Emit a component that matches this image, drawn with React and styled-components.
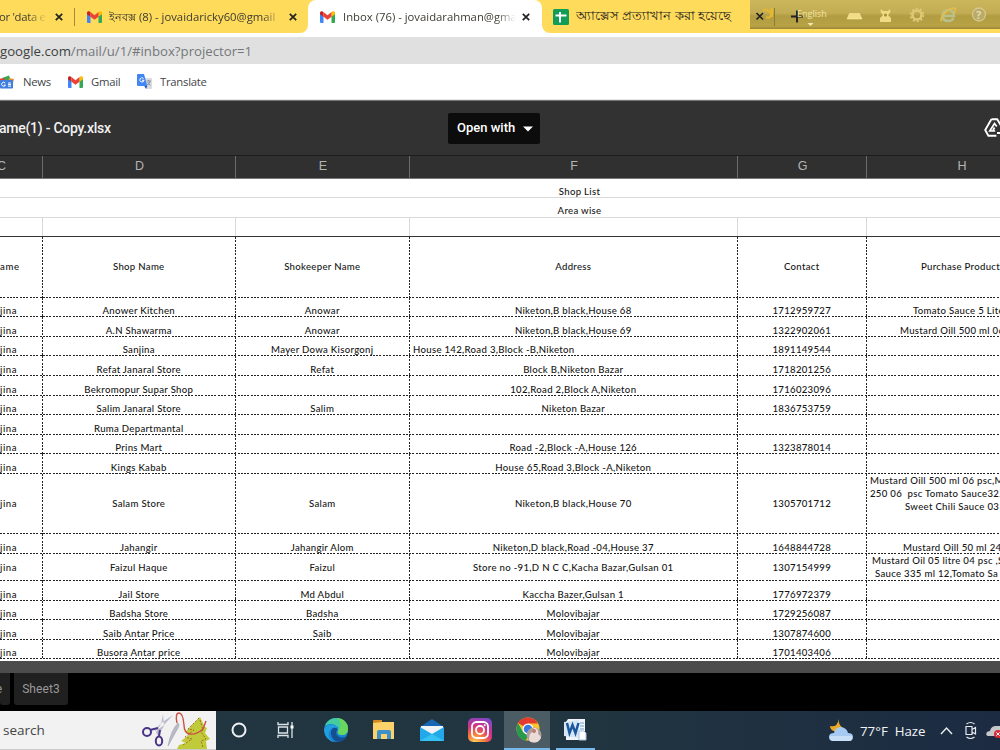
import styled, { createGlobalStyle } from 'styled-components';

const rows = [
  { h: 61, head: true, c: 'ame', d: 'Shop Name', e: 'Shokeeper Name', f: 'Address', g: 'Contact', x: [[54, 'Purchase Product']] },
  { h: 19, d: 'Anower Kitchen', e: 'Anowar', f: 'Niketon,B black,House 68', g: '1712959727', x: [[46, 'Tomato Sauce 5 Liter']] },
  { h: 20, d: 'A.N Shawarma', e: 'Anowar', f: 'Niketon,B black,House 69', g: '1322902061', x: [[33, 'Mustard Oill 500 ml 06']] },
  { h: 19, d: 'Sanjina', e: 'Mayer Dowa Kisorgonj', f: 'House 142,Road 3,Block -B,Niketon', left: true, g: '1891149544' },
  { h: 20, d: 'Refat Janaral Store', e: 'Refat', f: 'Block B,Niketon Bazar', g: '1718201256' },
  { h: 20, d: 'Bekromopur Supar Shop', f: '102,Road 2,Block A,Niketon', g: '1716023096' },
  { h: 19, d: 'Salim Janaral Store', e: 'Salim', f: 'Niketon Bazar', g: '1836753759' },
  { h: 20, d: 'Ruma Departmantal' },
  { h: 19, d: 'Prins Mart', f: 'Road -2,Block -A,House 126', g: '1323878014' },
  { h: 20, d: 'Kings Kabab', f: 'House 65,Road 3,Block -A,Niketon' },
  {
    h: 60,
    middle: true,
    d: 'Salam Store',
    e: 'Salam',
    f: 'Niketon,B black,House 70',
    g: '1305701712',
    x: [[3, 'Mustard Oill 500 ml 06 psc,M'], [3, '250 06  psc Tomato Sauce32.'], [38, 'Sweet Chili Sauce 03']],
  },
  { h: 20, d: 'Jahangir', e: 'Jahangir Alom', f: 'Niketon,D black,Road -04,House 37', g: '1648844728', x: [[36, 'Mustard Oill 50 ml 24']] },
  {
    h: 27,
    middle: true,
    d: 'Faizul Haque',
    e: 'Faizul',
    f: 'Store no -91,D N C C,Kacha Bazar,Gulsan 01',
    g: '1307154999',
    x: [[5, 'Mustard Oil 05 litre 04 psc ,S'], [8, 'Sauce 335 ml 12,Tomato Sa']],
  },
  { h: 20, d: 'Jail Store', e: 'Md Abdul', f: 'Kaccha Bazer,Gulsan 1', g: '1776972379' },
  { h: 19, d: 'Badsha Store', e: 'Badsha', f: 'Molovibajar', g: '1729256087' },
  { h: 20, d: 'Saib Antar Price', e: 'Saib', f: 'Molovibajar', g: '1307874600' },
  { h: 19, d: 'Busora Antar price', f: 'Molovibajar', g: '1701403406' },
];

function GmailIcon() {
  return (
    <svg width="15" height="12" viewBox="0 0 15 12">
      <path d="M0 2v9q0 1 1 1h2.5V5z" fill="#4285f4" />
      <path d="M15 2v9q0 1-1 1h-2.5V5z" fill="#34a853" />
      <path d="M0 2Q0 .5 1.3.2q1-.2 2.2.8v4.7L0 3.2z" fill="#c5221f" />
      <path d="M15 2q0-1.5-1.3-1.8-1-.2-2.2.8v4.7L15 3.2z" fill="#fbbc04" />
      <path d="M3.5 1l4 3.2 4-3.2v4.7l-4 3.1-4-3.1z" fill="#ea4335" />
    </svg>
  );
}

function CloseIcon() {
  return (
    <svg width="8" height="8" viewBox="0 0 8 8">
      <path d="M.8.8l6.4 6.4M7.2.8L.8 7.2" stroke="#222" strokeWidth="1.7" />
    </svg>
  );
}

function SheetsIcon() {
  return (
    <svg width="16" height="16" viewBox="0 0 16 16">
      <rect width="16" height="16" rx="1.5" fill="#109d58" />
      <path d="M2.500 6.500h11M7 3v10.500" stroke="#fff" strokeWidth="2" />
    </svg>
  );
}

function NewsIcon() {
  return (
    <svg width="14" height="14" viewBox="0 0 14 14">
      <path d="M2 3l7-2.500 2 5H2z" fill="#34a853" />
      <path d="M0 3.500h5v3H0z" fill="#ea4335" />
      <path d="M9 3l5 1-1 4H8z" fill="#e8903a" />
      <rect x="0" y="5" width="13" height="8.500" rx="1" fill="#3f7de0" />
      <path d="M5.200 8a2 2 0 1 0 .3 2H4M8 8h3M8 9.600h3M8 11.200h3" stroke="#fff" fill="none" />
    </svg>
  );
}

function TranslateIcon() {
  return (
    <svg width="15" height="15" viewBox="0 0 15 15">
      <path d="M6 4h8q1 0 1 1v9q0 1-1 1H9z" fill="#d9dce0" />
      <path d="M1 0h6l3.300 12H1q-1 0-1-1V1q0-1 1-1z" fill="#4285f4" />
      <path d="M7.300 12h3L9 15z" fill="#2457b5" />
      <path d="M6.500 4.500a2.100 2.100 0 1 0 .5 1.800H5" stroke="#fff" fill="none" />
      <path d="M9.500 7H14M11.800 6v1M10 11q3-1 3.200-4M10.500 8q.8 2 3 3.500" stroke="#7f8b99" strokeWidth=".9" fill="none" />
    </svg>
  );
}

function DriveAddIcon() {
  return (
    <svg width="22" height="20" viewBox="0 0 22 20">
      <path d="M7.400 1.200h5.800l6 10.200M7.400 1.200L1.200 12l3.200 5.800h8" fill="none" stroke="#fff" strokeWidth="1.900" />
      <path d="M12.800 8.500l-2.300-3L5.800 13h5.400M10.500 9.500L9 12.500" fill="none" stroke="#fff" strokeWidth="1.700" />
      <path d="M17 11v8M13 15h8" stroke="#fff" strokeWidth="2" />
    </svg>
  );
}

function LanguageBar() {
  return (
    <Overlay>
      <svg width="250" height="29" viewBox="0 0 250 29">
        <path d="M13 11q3-3 5 0t3-2v6q-1 4-5 2M22 8v9" stroke="#e3b72e" strokeWidth="2" fill="none" />
        <path d="M24.500 8v18" stroke="#8d7a37" />
        <path d="M6.500 13l6.500 6.500M13 13l-6.500 6.500" stroke="#222" strokeWidth="1.700" />
        <path d="M41 16.500h12M47 10.500v12" stroke="#222" strokeWidth="1.900" />
        <path d="M57.500 23h6l-3 3z" fill="#f4e9b5" />
        <path d="M97 19l2.500-5.500h10L112 19z" fill="#f2dd86" stroke="#fff0aa" strokeWidth=".5" />
        <path d="M131 9l2 2h5l2-2 .5 3-2.500 3 3 3v4h-11v-4l3-3-2.500-3z" fill="#f0da83" />
        <circle cx="135.500" cy="15" r="1.500" fill="#a18c3e" />
        <circle cx="167" cy="15" r="4.500" fill="none" stroke="#e0c878" strokeWidth="2.500" />
        <circle cx="167" cy="15" r="6.400" fill="none" stroke="#e0c878" strokeWidth="1.800" strokeDasharray="2 2.020" />
        <path d="M192.500 16h11.500q0-6-5.500-6t-6 6q.5 5 6 5 3.500 0 5-3" fill="none" stroke="#b9c18a" strokeWidth="2.600" />
        <path d="M192 21q-3-1 2-7 5-6 10-6 3 1 0 5" fill="none" stroke="#e7bd45" strokeWidth="1.500" />
        <circle cx="229" cy="14.500" r="6.500" fill="#b9aa68" stroke="#d6c88d" strokeWidth="1.300" />
      </svg>
      <LanguageName>English</LanguageName>
      <HelpMark>?</HelpMark>
    </Overlay>
  );
}

function SewingArt() {
  return (
    <svg width="75" height="38" viewBox="0 0 75 38">
      <path d="M22 3l-2 10-5 8 2 4 6-10zM32 4L22 15l-8 5 1-3 8-7z" fill="#bcbdcc" />
      <circle cx="6" cy="21" r="4" fill="none" stroke="#493485" strokeWidth="2" />
      <path d="M9 19l8-2M18 25l1-6" stroke="#493485" strokeWidth="2" />
      <ellipse cx="18" cy="30" rx="3.200" ry="4.500" fill="none" stroke="#493485" strokeWidth="2" />
      <path d="M37 12q2 1 0 5L27 35q3-16 10-23z" fill="#b9bac6" stroke="#999ba9" strokeWidth=".5" />
      <path d="M59 6l5 10 2 1-2 5 5 6-4 2 1 8H36l2-4 7-2-5-2 8-6-4-3z" fill="#c0cb3a" />
      <path d="M58 7L47 18l6 1-9 7 7 2-9 6M59 9l3 10-2 2 5 7-5 2 2 6" fill="none" stroke="#a66a28" strokeDasharray="2 1.500" />
      <path d="M36 12q-2-10 2-10t5 12q0 8 6 9t13-5l3-8" fill="none" stroke="#cc5046" strokeWidth="1.400" />
    </svg>
  );
}

function EdgeIcon() {
  return (
    <svg width="24" height="24" viewBox="0 0 24 24">
      <circle cx="12" cy="12" r="12" fill="#1685d1" />
      <path d="M1 8Q4 0 12 0c8 0 12 6 12 11 0 4-3 6-6 6-3 0-5-2-4-4 2-5-7-10-13-5z" fill="#45cba0" />
      <path d="M13 0q11 1 11 11c0 4-3 6-6 6-3 0-5-2-4-4Q20 6 13 0z" fill="#68d65f" />
      <path d="M14 9Q6 9 7 16q1 7 8 8 6-1 8-6-5 3-9 0-3-2-1-6z" fill="#164f91" />
      <path d="M0 12q2-6 8-5 5 0 6 4-6-4-9 3-2 6 5 10Q2 22 0 12z" fill="#239fe0" />
    </svg>
  );
}

function FolderIcon() {
  return (
    <svg width="22" height="19" viewBox="0 0 22 19">
      <path d="M0 1q0-1 1-1h8v3H0z" fill="#d48a20" />
      <path d="M0 3l9-1h12v17H0z" fill="#fbd36a" />
      <path d="M4 19V12q0-2 2-2h10q2 0 2 2v7h-4v-5H8v5z" fill="#3d91ca" />
    </svg>
  );
}

function MailIcon() {
  return (
    <svg width="24" height="22" viewBox="0 0 24 22">
      <path d="M0 8L12 0l12 8v3H0z" fill="#1567b4" />
      <path d="M1 7h22v10H1z" fill="#f0f3f5" />
      <path d="M0 8l12 7L24 8v14H0z" fill="#23a9ea" />
      <path d="M12 15L0 22h24z" fill="#36c2f5" />
    </svg>
  );
}

function InstagramIcon() {
  return (
    <svg width="24" height="24" viewBox="0 0 24 24">
      <defs>
        <radialGradient id="insta" cx=".3" cy="1.050" r="1.200">
          <stop offset="0" stopColor="#fed55f" />
          <stop offset=".35" stopColor="#f3743b" />
          <stop offset=".6" stopColor="#d73383" />
          <stop offset="1" stopColor="#6c4bd0" />
        </radialGradient>
      </defs>
      <rect width="24" height="24" rx="5" fill="url(#insta)" />
      <rect x="4" y="4" width="16" height="16" rx="4.500" fill="none" stroke="#fff" strokeWidth="1.800" />
      <circle cx="12" cy="12" r="4" fill="none" stroke="#fff" strokeWidth="1.800" />
      <circle cx="16.700" cy="7.300" r="1" fill="#fff" />
    </svg>
  );
}

function ChromeIcon() {
  return (
    <svg width="26" height="26" viewBox="0 0 26 26">
      <circle cx="12" cy="12" r="11.500" fill="#f8c62c" />
      <path d="M12 12L2 6Q5 .5 12 .5 19 .5 22 6.500H12z" fill="#e33b2e" />
      <path d="M2 6l5 9 5 3-2 5.400Q.5 21.500.5 12 .5 9 2 6z" fill="#269b4b" />
      <circle cx="12" cy="12" r="5.500" fill="#fff" />
      <circle cx="12" cy="12" r="4.300" fill="#3979df" />
      <circle cx="18" cy="18" r="7.500" fill="#ad9d9b" />
      <path d="M13 23q0-6 3-8 1-5 4-4 3 2 2 6 3 2 3 4-3 5-7 4.500-4 0-5-2.500z" fill="#eadbd8" />
      <circle cx="18" cy="14" r="2" fill="#b77b6b" />
    </svg>
  );
}

function WordIcon() {
  return (
    <svg width="23" height="22" viewBox="0 0 23 22">
      <path d="M4 0h17v21H2V3z" fill="#eff5fb" />
      <path d="M0 3l15-2v18L0 17z" fill="#d7e7f5" />
      <path d="M3 4l2.500 10L8.500 6l3 8L14.500 4" fill="none" stroke="#1c579f" strokeWidth="2.500" />
      <path d="M16 4h4M16 7h4M16 10h4" stroke="#6c9fd0" />
      <path d="M15 12h5l2 2v7h-7z" fill="#fff" stroke="#a8c4df" />
    </svg>
  );
}

function WeatherIcon() {
  return (
    <svg width="24" height="23" viewBox="0 0 24 23">
      <path d="M10 0q-1 6 4 9l-6 4Q1 12 1 7q7 2 9-7z" fill="#eca928" />
      <path d="M4 22q-4 0-4-4t5-4q1-6 7-6 6 1 7 6 5 0 5 4t-4 4z" fill="#a6caf2" />
      <path d="M1 17h22q1 5-3 5H4q-4-1-3-5z" fill="#c9def7" />
    </svg>
  );
}

function Cells({ row }) {
  return (
    <Row $h={row.h} $middle={row.head || row.middle}>
      <Cell $left={0} $wide>{row.c || 'jina'}</Cell>
      <Cell>{row.d}</Cell>
      <Cell>{row.e}</Cell>
      <Cell $left={row.left ? 3 : undefined}>{row.f}</Cell>
      <Cell>{row.g}</Cell>
      <ProductCell $align={row.h === 60 ? 'flex-start' : row.h <= 20 ? 'flex-end' : 'center'}>
        {(row.x || []).map(([indent, text]) => (
          <ProductLine key={text} $indent={indent}>
            {text}
          </ProductLine>
        ))}
      </ProductCell>
    </Row>
  );
}

function App() {
  return (
    <Screen>
      <GlobalStyle />
      <TabStrip>
        <Tab $w={75}>
          <TabTitle $x={-1} $w={48} $tight>or 'data e</TabTitle>
          <TabClose $x={55}><CloseIcon /></TabClose>
        </Tab>
        <Tab $w={233} $line>
          <TabIcon $x={12}><GmailIcon /></TabIcon>
          <TabTitle $x={34} $w={173}>ইনবক্স (8) - jovaidaricky60@gmail</TabTitle>
          <TabClose $x={214}><CloseIcon /></TabClose>
        </Tab>
        <Tab $w={234} $active>
          <TabIcon $x={12}><GmailIcon /></TabIcon>
          <TabTitle $x={35} $w={173}>Inbox (76) - jovaidarahman@gmail</TabTitle>
          <TabClose $x={214}><CloseIcon /></TabClose>
        </Tab>
        <Tab $w={208}>
          <TabIcon $x={11}><SheetsIcon /></TabIcon>
          <TabTitle $x={34} $w={174} $full>অ্যাক্সেস প্রত্যাখান করা হয়েছে</TabTitle>
        </Tab>
        <LanguageBar />
      </TabStrip>
      <AddressBar>
        <b>google.com</b>/mail/u/1/#inbox?projector=1
      </AddressBar>
      <Bookmarks>
        <Bookmark $w={68} $gap={9}><NewsIcon />News</Bookmark>
        <Bookmark $w={69} $gap={8}><GmailIcon />Gmail</Bookmark>
        <Bookmark $gap={8}><TranslateIcon />Translate</Bookmark>
      </Bookmarks>
      <ViewerBar>
        <FileName>ame(1) - Copy.xlsx</FileName>
        <OpenWith>
          Open with
          <svg width="10" height="6" viewBox="0 0 10 6">
            <path d="M0 .5h10L5 5.500z" fill="#fff" />
          </svg>
        </OpenWith>
        <DriveButton><DriveAddIcon /></DriveButton>
      </ViewerBar>
      <ColumnHeads>
        <ColumnHead $first>C</ColumnHead>
        <ColumnHead>D</ColumnHead>
        <ColumnHead>E</ColumnHead>
        <ColumnHead>F</ColumnHead>
        <ColumnHead>G</ColumnHead>
        <ColumnHead>H</ColumnHead>
      </ColumnHeads>
      <Sheet>
        <TitleRow $h={19}>Shop List</TitleRow>
        <TitleRow $h={20}>Area wise</TitleRow>
        <BlankRow>
          <i /><i /><i /><i /><i /><i />
        </BlankRow>
        {rows.map((row, i) => (
          <Cells key={i} row={row} />
        ))}
      </Sheet>
      <SheetTabs>
        <SheetTab $w={10}><span>e</span></SheetTab>
        <SheetTab $w={54}>Sheet3</SheetTab>
      </SheetTabs>
      <Taskbar>
        <SearchBox>
          search
          <SewingArt />
        </SearchBox>
        <Task $w={46}>
          <svg width="16" height="16" viewBox="0 0 16 16">
            <circle cx="8" cy="8" r="6.500" fill="none" stroke="#edf1f3" strokeWidth="2" />
          </svg>
        </Task>
        <Task $w={48}>
          <svg width="18" height="16" viewBox="0 0 18 16">
            <path d="M1 0v2.500h10V0M1 16v-2.500h10V16M1.500 5h9v6h-9zM15 0v16" fill="none" stroke="#dce3e7" strokeWidth="1.300" />
            <path d="M13.500 3.500h3v3h-3z" fill="#fff" />
          </svg>
        </Task>
        <Task $w={51}><EdgeIcon /></Task>
        <Task $w={45}><FolderIcon /></Task>
        <Task $w={51}><MailIcon /></Task>
        <Task $w={45}><InstagramIcon /></Task>
        <Task $w={46} $gap={2} $active><ChromeIcon /></Task>
        <Task $w={39} $gap={6} $open><WordIcon /></Task>
        <Tray>
          <WeatherIcon />
          <Weather>77°F&nbsp; Haze</Weather>
          <svg width="60" height="20" viewBox="0 0 60 20">
            <path d="M1 13l5.500-6 5.500 6" fill="none" stroke="#e5eaef" strokeWidth="1.500" />
            <path d="M26 5.500h6v8h-6zM32 8.500l3.500-2v6.500l-3.500-2M26.500 3q4-3 8 0M26.500 16q4 3 8 0" fill="none" stroke="#e5eaef" strokeWidth="1.200" />
            <path d="M48 15q-3-1-1-4 2-1 3-1 1-5 6-5h4v10z" fill="#c6c8cb" />
            <circle cx="58" cy="13" r="4" fill="#db2937" />
            <path d="M56.300 11.300l3.400 3.400M59.700 11.300l-3.400 3.400" stroke="#fff" />
          </svg>
        </Tray>
      </Taskbar>
    </Screen>
  );
}

export default App;

const GlobalStyle = createGlobalStyle`
  * {
    box-sizing: border-box;
  }
  body {
    margin: 0;
    overflow: hidden;
  }
  svg {
    display: block;
    flex-shrink: 0;
  }
`;

const columns = '43px 193px 174px 328px 129px 190px';

const Screen = styled.div`
  width: 1000px;
  height: 750px;
  overflow: hidden;
  display: flex;
  flex-direction: column;
  background: #fff;
  font-family: 'Open Sans', 'Noto Sans', sans-serif;
  white-space: nowrap;
`;

const TabStrip = styled.div`
  position: relative;
  height: 33px;
  flex-shrink: 0;
  display: flex;
  background: linear-gradient(90deg, #ffdb5c 0 300px, #fff 300px 550px, #ffdb5c 550px);
`;

const Tab = styled.div`
  position: relative;
  width: ${(props) => props.$w}px;
  height: 33px;
  flex-shrink: 0;
  background: ${(props) => (props.$active ? '#fff' : '#ffdb5c')};
  border-radius: ${(props) => (props.$active ? '8px 8px 0 0' : '0 0 8px 8px')};
  ${(props) => props.$active && 'box-shadow: 0 -8px 0 #ffdb5c, -8px -8px 0 -1px #ffdb5c, 8px -8px 0 -1px #ffdb5c;'}

  &::before {
    content: '';
    display: ${(props) => (props.$line ? 'block' : 'none')};
    position: absolute;
    left: -1px;
    top: 8px;
    width: 1px;
    height: 18px;
    background: #a18b40;
  }
`;

const TabTitle = styled.div`
  position: absolute;
  left: ${(props) => props.$x}px;
  top: ${(props) => (props.$full ? 6 : 7)}px;
  width: ${(props) => props.$w}px;
  overflow: hidden;
  color: ${(props) => (props.$full ? '#25231b' : '#3d3b32')};
  font-size: ${(props) => (props.$full ? 12.8 : 11.3)}px;
  letter-spacing: ${(props) => (props.$tight ? -0.3 : 0)}px;
  line-height: 19px;
  ${(props) => !props.$full && 'mask-image: linear-gradient(90deg, #000 calc(100% - 20px), transparent);'}
`;

const TabIcon = styled.div`
  position: absolute;
  left: ${(props) => props.$x}px;
  top: 0;
  height: 33px;
  display: flex;
  align-items: center;
`;

const TabClose = styled(TabIcon)``;

const Overlay = styled.div`
  position: absolute;
  left: 750px;
  top: 0;
  width: 250px;
  height: 29px;
  background: linear-gradient(#ccb65c, #c3ad54 45%, #b19c42 55%, #b8a245 90%, #988439);
`;

const LanguageName = styled.span`
  position: absolute;
  left: 47px;
  top: 6px;
  font-size: 9px;
  line-height: 15px;
  color: #f4e6a4;
`;

const HelpMark = styled.span`
  position: absolute;
  left: 226px;
  top: 7px;
  font-size: 11px;
  font-weight: 700;
  line-height: 15px;
  color: #e6dba8;
`;

const AddressBar = styled.div`
  height: 31px;
  flex-shrink: 0;
  border-top: 4px solid #fff;
  background: #e0e0e0;
  color: #74777a;
  font-size: 13.2px;
  line-height: 28px;

  b {
    color: #3c3f42;
    font-weight: 400;
  }
`;

const Bookmarks = styled.div`
  height: 36px;
  flex-shrink: 0;
  display: flex;
  align-items: center;
  border-bottom: 1px solid #e4e4e4;
`;

const Bookmark = styled.div`
  width: ${(props) => (props.$w ? `${props.$w}px` : 'auto')};
  display: flex;
  align-items: center;
  gap: ${(props) => props.$gap}px;
  color: #43464a;
  font-size: 11.3px;
  letter-spacing: -0.25px;
`;

const ViewerBar = styled.div`
  height: 55px;
  flex-shrink: 0;
  display: flex;
  align-items: center;
  border-top: 1px solid #777;
  background: #323232;
  color: #f1f1f1;
  font-family: Roboto, sans-serif;
`;

const FileName = styled.div`
  width: 448px;
  flex-shrink: 0;
  margin-left: -1px;
  margin-right: 1px;
  font-size: 14px;
  font-weight: 500;
  letter-spacing: -0.25px;
`;

const OpenWith = styled.button`
  width: 92px;
  height: 31px;
  flex-shrink: 0;
  margin-left: 0;
  padding: 0 7px 2px 9px;
  border: none;
  border-radius: 2px;
  display: flex;
  align-items: center;
  justify-content: space-between;
  background: #0c0c0c;
  color: #fff;
  font: 500 13px Roboto, sans-serif;

  svg {
    margin-top: 4px;
  }
`;

const DriveButton = styled.div`
  margin-left: 444px;
`;

const ColumnHeads = styled.div`
  height: 24px;
  flex-shrink: 0;
  display: grid;
  grid-template-columns: ${columns};
  background: #303030;
  border-top: 1px solid #1d1d1d;
  border-bottom: 1px solid #777;
`;

const ColumnHead = styled.div`
  display: flex;
  align-items: flex-start;
  justify-content: ${(props) => (props.$first ? 'flex-start' : 'center')};
  margin-left: ${(props) => (props.$first ? '-3px' : 0)};
  padding-left: ${(props) => (props.$first ? 0 : 1)}px;
  border-right: 1px solid #6b6b6b;
  color: #b4b4b4;
  font-family: 'Liberation Sans', sans-serif;
  font-size: 12.5px;
  line-height: 20px;
`;

const Sheet = styled.div`
  height: 482px;
  flex-shrink: 0;
  overflow: hidden;
  color: #161616;
  font-family: Lato, 'Open Sans', sans-serif;
  font-size: 9.6px;
  font-weight: 500;
  letter-spacing: 0.3px;
`;

const TitleRow = styled.div`
  height: ${(props) => props.$h}px;
  padding: 5px 0 0 159px;
  border-bottom: 1px solid #d9d9d9;
  line-height: 15px;
  text-align: center;
`;

const BlankRow = styled.div`
  height: 19px;
  display: grid;
  grid-template-columns: ${columns};
  border-bottom: 1px solid #333;

  i {
    border-right: 1px solid #d9d9d9;
  }
`;

const Row = styled.div`
  height: ${(props) => props.$h}px;
  display: grid;
  grid-template-columns: ${columns};
  align-items: stretch;
  background: repeating-linear-gradient(90deg, #222 0 2px, transparent 2px 3.3px) bottom / 100% 1px no-repeat;

  > div {
    align-items: ${(props) => (props.$middle ? 'center' : 'flex-end')};
    padding-bottom: ${(props) => (props.$middle ? 2 : 0.5)}px;
  }
`;

const Cell = styled.div`
  display: flex;
  justify-content: ${(props) => (props.$left === undefined ? 'center' : 'flex-start')};
  padding-left: ${(props) => props.$left || 0}px;
  padding-right: ${(props) => (props.$left === undefined ? 1.5 : 0)}px;
  letter-spacing: ${(props) => (props.$wide ? 0.6 : 0.3)}px;
  line-height: 13px;
  background: repeating-linear-gradient(#222 0 2px, transparent 2px 3.3px) right / 1px 100% no-repeat;
`;

const ProductCell = styled.div`
  display: flex;
  flex-direction: column;
  justify-content: ${(props) => props.$align};
`;

const ProductLine = styled.div`
  width: 100%;
  padding-left: ${(props) => props.$indent}px;
  line-height: 13px;
  white-space: pre;
`;

const SheetTabs = styled.div`
  height: 50px;
  flex-shrink: 0;
  display: flex;
  gap: 4px;
  border-top: 12px solid #4c4c4c;
  background: #000;
`;

const SheetTab = styled.div`
  width: ${(props) => props.$w}px;
  height: 32px;
  display: flex;
  align-items: center;
  justify-content: center;
  border-radius: 0 0 3px 3px;
  background: #202020;
  color: #999;
  font-family: Roboto, sans-serif;
  font-size: 12px;
  letter-spacing: 0.1px;

  span {
    margin-left: -12px;
  }
`;

const Taskbar = styled.div`
  height: 39px;
  display: flex;
  background: linear-gradient(90deg, #20353f, #213640 55%, #1c2b42);
`;

const SearchBox = styled.div`
  width: 216px;
  height: 39px;
  padding-left: 3px;
  display: flex;
  align-items: center;
  justify-content: space-between;
  background: #f2f2f2;
  border-bottom: 1px solid #c9c9c9;
  color: #444;
  font-size: 13.5px;
`;

const Task = styled.div`
  width: ${(props) => props.$w}px;
  margin-left: ${(props) => props.$gap || 0}px;
  padding-left: ${(props) => (props.$active ? 3 : 0)}px;
  display: flex;
  align-items: center;
  justify-content: center;
  background: ${(props) => (props.$active ? '#4b5c64' : 'transparent')};
  border-bottom: 2px solid ${(props) => (props.$active || props.$open ? '#76b9ed' : 'transparent')};
`;

const Tray = styled.div`
  margin-left: auto;
  display: flex;
  align-items: center;
`;

const Weather = styled.div`
  width: 87px;
  padding-left: 7px;
  color: #f2f4f6;
  font-size: 13.3px;
`;
